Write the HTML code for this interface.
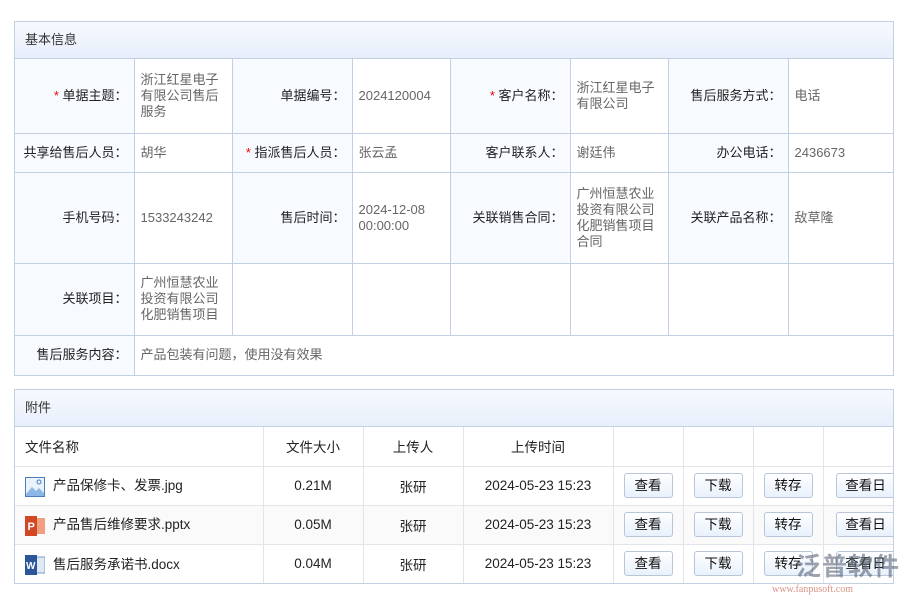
<!DOCTYPE html>
<html><head><meta charset="utf-8"><style>
*{box-sizing:border-box;margin:0;padding:0}
body{width:900px;height:600px;background:#fff;font-family:"Liberation Sans","Noto Sans CJK SC",sans-serif;font-size:13px;color:#333;position:relative;overflow:hidden}
.box{position:absolute;left:14px;width:880px;border:1px solid #c3cfe2}
.hd{height:37px;line-height:36px;padding-left:10px;background:linear-gradient(#f6f9fe,#e8effb);border-bottom:1px solid #c3cfe2}
table{border-collapse:collapse;width:100%;table-layout:fixed}
.t1 td{border:1px solid #c3cfe2;vertical-align:middle;line-height:16px}
.t1 tr td:first-child{border-left:none}.t1 tr td:last-child{border-right:none}
.t1 tr:last-child td{border-bottom:none}.t1 tr:first-child td{border-top:none}
.l{background:#f7faff;text-align:right;padding-right:6px;color:#222}
.v{padding:0 6px;color:#666}
.s{color:#e00}
.t2 td{border:1px solid #e2e4ea;text-align:center;height:39px;color:#222;font-size:13.5px}
.t2 tr td:first-child{border-left:none;text-align:left;padding-left:10px}.t2 tr td:last-child{border-right:none}
.t2 tr:last-child td{border-bottom:none}.t2 tr:first-child td{border-top:none}
.t2 tr.g td{background:#fafafa}
.b{display:inline-block;width:49px;height:25px;line-height:23px;text-align:center;border:1px solid #b9c6da;border-radius:3px;background:linear-gradient(#fff,#e8f1fc);font-size:13.5px;color:#111}
.ic{display:inline-block;width:20px;height:20px;vertical-align:middle;margin-right:8px}
</style></head><body>
<div class="box" style="top:21px">
<div class="hd">基本信息</div>
<table class="t1">
<colgroup><col style="width:119px"><col style="width:98px"><col style="width:120px"><col style="width:98px"><col style="width:120px"><col style="width:98px"><col style="width:120px"><col></colgroup>
<tr style="height:74px"><td class="l"><span class="s">* </span>单据主题：</td><td class="v">浙江红星电子有限公司售后服务</td><td class="l">单据编号：</td><td class="v">2024120004</td><td class="l"><span class="s">* </span>客户名称：</td><td class="v">浙江红星电子有限公司</td><td class="l">售后服务方式：</td><td class="v">电话</td></tr>
<tr style="height:39px"><td class="l">共享给售后人员：</td><td class="v">胡华</td><td class="l"><span class="s">* </span>指派售后人员：</td><td class="v">张云孟</td><td class="l">客户联系人：</td><td class="v">谢廷伟</td><td class="l">办公电话：</td><td class="v">2436673</td></tr>
<tr style="height:91px"><td class="l">手机号码：</td><td class="v">1533243242</td><td class="l">售后时间：</td><td class="v">2024-12-08 00:00:00</td><td class="l">关联销售合同：</td><td class="v">广州恒慧农业投资有限公司化肥销售项目合同</td><td class="l">关联产品名称：</td><td class="v">敌草隆</td></tr>
<tr style="height:72px"><td class="l">关联项目：</td><td class="v">广州恒慧农业投资有限公司化肥销售项目</td><td></td><td></td><td></td><td></td><td></td><td></td></tr>
<tr style="height:40px"><td class="l">售后服务内容：</td><td class="v" colspan="7">产品包装有问题，使用没有效果</td></tr>
</table></div>
<div class="box" style="top:389px">
<div class="hd">附件</div>
<table class="t2">
<colgroup><col style="width:248px"><col style="width:100px"><col style="width:100px"><col style="width:150px"><col style="width:70px"><col style="width:70px"><col style="width:70px"><col></colgroup>
<tr><td style="height:38px">文件名称</td><td>文件大小</td><td>上传人</td><td>上传时间</td><td></td><td></td><td></td><td></td></tr>
<tr><td><svg class="ic" viewBox="0 0 20 20"><rect x="0.5" y="0.5" width="19" height="19" fill="#eaf3fc" stroke="#4a7fbf"/><path d="M1 17 L7 10 L11 14 L14 11 L19 16 V19 H1Z" fill="#8db7e6"/><circle cx="14" cy="5" r="2" fill="none" stroke="#4a7fbf"/></svg>产品保修卡、发票.jpg</td><td>0.21M</td><td>张研</td><td>2024-05-23 15:23</td><td><span class="b">查看</span></td><td><span class="b">下载</span></td><td><span class="b">转存</span></td><td style="text-align:left;padding-left:12px;overflow:hidden;white-space:nowrap"><span class="b" style="width:60px">查看日</span></td></tr>
<tr class="g"><td><svg class="ic" viewBox="0 0 20 20"><rect x="4" y="2" width="16" height="16" fill="#f0a080"/><rect x="0" y="0" width="12" height="20" fill="#d24726"/><text x="2.5" y="14" font-size="11" fill="#fff" font-family="Liberation Sans" font-weight="bold">P</text></svg>产品售后维修要求.pptx</td><td>0.05M</td><td>张研</td><td>2024-05-23 15:23</td><td><span class="b">查看</span></td><td><span class="b">下载</span></td><td><span class="b">转存</span></td><td style="text-align:left;padding-left:12px;overflow:hidden;white-space:nowrap"><span class="b" style="width:60px">查看日</span></td></tr>
<tr><td><svg class="ic" viewBox="0 0 20 20"><rect x="6" y="2" width="14" height="16" fill="#dfe8f5" stroke="#7a9cc8"/><rect x="0" y="0" width="12" height="20" fill="#2b579a"/><text x="1" y="14" font-size="10" fill="#fff" font-family="Liberation Sans" font-weight="bold">W</text></svg>售后服务承诺书.docx</td><td>0.04M</td><td>张研</td><td>2024-05-23 15:23</td><td><span class="b">查看</span></td><td><span class="b">下载</span></td><td><span class="b">转存</span></td><td style="text-align:left;padding-left:12px;overflow:hidden;white-space:nowrap"><span class="b" style="width:60px">查看日</span></td></tr>
</table></div>
<div style="position:absolute;left:796px;top:552px;font-size:25px;line-height:30px;white-space:nowrap;color:rgba(90,100,120,.6);font-weight:bold;letter-spacing:1px">泛普软件</div>
<div style="position:absolute;left:772px;top:584px;font-size:10px;line-height:12px;white-space:nowrap;color:rgba(200,100,80,.7);font-family:'Liberation Serif',serif">www.fanpusoft.com</div>
</body></html>
